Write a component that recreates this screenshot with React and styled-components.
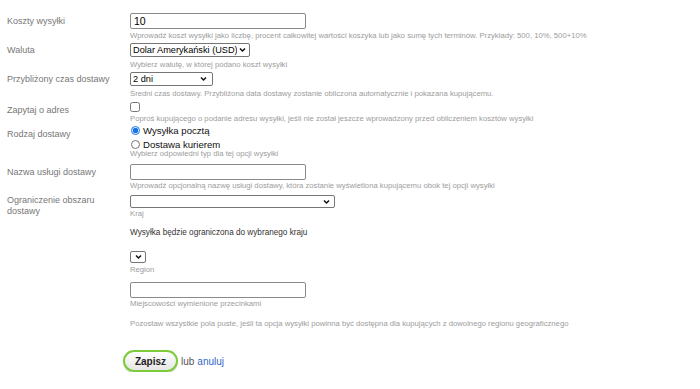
import React from "react";
import styled, { createGlobalStyle } from "styled-components";

const Global = createGlobalStyle`
  html, body { margin: 0; padding: 0; background: #fff; }
  body { font-family: "Liberation Sans", Arial, sans-serif; }
`;

const Form = styled.form`
  padding: 13px 0 0 7px;
  width: 693px;
`;

const Row = styled.div`
  display: grid;
  grid-template-columns: 123px 1fr;
  margin-bottom: ${(p) => p.$mb ?? 3}px;
`;

const Label = styled.div`
  font-size: 9px;
  color: #777;
  padding-top: ${(p) => p.$pt ?? 3}px;
  line-height: 11px;
  width: ${(p) => p.$w || "auto"};
`;

const Field = styled.div`
  display: flex;
  flex-direction: column;
  align-items: flex-start;
`;

const TextInput = styled.input`
  box-sizing: border-box;
  width: 176px;
  height: 16px;
  border: 1px solid #8a8a8a;
  border-radius: 2px;
  padding: 0 3px;
  font-family: "Liberation Sans", Arial, sans-serif;
  font-size: 10.5px;
  color: #000;
  margin: ${(p) => p.$mt || 0}px 0 0 0;
  outline: none;
`;

const SelectWrap = styled.span`
  position: relative;
  display: inline-flex;
  margin-top: ${(p) => p.$mt || 0}px;
`;

const Select = styled.select`
  appearance: none;
  -webkit-appearance: none;
  box-sizing: border-box;
  width: ${(p) => p.$w}px;
  height: ${(p) => p.$h || 14}px;
  border: 1px solid #767676;
  border-radius: 2px;
  padding: 0 12px 0 2px;
  font-family: "Liberation Sans", Arial, sans-serif;
  font-size: 9.2px;
  color: #000;
  background: #fff;
  margin: 0;
  line-height: 12px;
`;

const Chevron = styled.svg`
  position: absolute;
  right: ${(p) => p.$r ?? 4}px;
  top: 50%;
  transform: translateY(-50%);
  width: 7px;
  height: 5px;
  pointer-events: none;
`;

const Help = styled.div`
  font-size: 7.7px;
  color: #9c9c9c;
  line-height: 9px;
  margin-top: ${(p) => p.$mt ?? 2}px;
  white-space: nowrap;
`;

const Note = styled.div`
  font-size: 8.2px;
  color: #333;
  line-height: 10px;
  margin: ${(p) => p.$m || "0"};
`;

const Check = styled.input`
  width: 10px;
  height: 10px;
  margin: 0;
`;

const Radios = styled.div`
  display: flex;
  flex-direction: column;
  gap: 1px;
`;

const RadioLabel = styled.label`
  display: flex;
  align-items: center;
  gap: 3px;
  font-size: 9.6px;
  color: #111;
  line-height: 13px;
`;

const Radio = styled.input`
  width: 9px;
  height: 9px;
  margin: 0 0 0 1px;
  accent-color: #1a73e8;
`;

const Actions = styled.div`
  display: flex;
  align-items: center;
  gap: 3px;
  margin: 22px 0 0 116px;
  font-size: 10px;
  color: #555;
`;

const SaveButton = styled.button`
  box-sizing: border-box;
  width: 55px;
  height: 22px;
  border: 2px solid #7ccc3a;
  border-radius: 11px;
  background: linear-gradient(#ffffff, #e6e6e6);
  font-family: "Liberation Sans", Arial, sans-serif;
  font-weight: bold;
  font-size: 10px;
  color: #222;
  padding: 0;
  box-shadow: 0 1px 1px rgba(0,0,0,0.2);
`;

const CancelLink = styled.a`
  color: #3366cc;
  text-decoration: none;
`;

function Dropdown({ w, h, r, mt, children }) {
  return (
    <SelectWrap $mt={mt}>
      <Select $w={w} $h={h}>{children}</Select>
      <Chevron $r={r} viewBox="0 0 7 5">
        <path d="M1 1 L3.5 3.5 L6 1" fill="none" stroke="#111" strokeWidth="1.5" />
      </Chevron>
    </SelectWrap>
  );
}

export default function App() {
  return (
    <>
      <Global />
      <Form onSubmit={(e) => e.preventDefault()}>
        <Row $mb={3}>
          <Label $pt={3}>Koszty wysyłki</Label>
          <Field>
            <TextInput defaultValue="10" />
            <Help>
              Wprowadź koszt wysyłki jako liczbę, procent całkowitej wartości koszyka lub jako sumę tych terminów. Przykłady: 500, 10%, 500+10%
            </Help>
          </Field>
        </Row>
        <Row $mb={3}>
          <Label $pt={2}>Waluta</Label>
          <Field>
            <Dropdown w={120}>
              <option>Dolar Amerykański (USD)</option>
            </Dropdown>
            <Help $mt={3}>Wybierz walutę, w której podano koszt wysyłki</Help>
          </Field>
        </Row>
        <Row $mb={4}>
          <Label $pt={2}>Przybliżony czas dostawy</Label>
          <Field>
            <Dropdown w={83} r={6}>
              <option>2 dni</option>
            </Dropdown>
            <Help $mt={3}>
              Średni czas dostawy. Przybliżona data dostawy zostanie obliczona automatycznie i pokazana kupującemu.
            </Help>
          </Field>
        </Row>
        <Row $mb={1}>
          <Label $pt={3}>Zapytaj o adres</Label>
          <Field>
            <Check type="checkbox" />
            <Help $mt={2}>
              Poproś kupującego o podanie adresu wysyłki, jeśli nie został jeszcze wprowadzony przed obliczeniem kosztów wysyłki
            </Help>
          </Field>
        </Row>
        <Row $mb={6}>
          <Label $pt={5}>Rodzaj dostawy</Label>
          <Field>
            <Radios>
              <RadioLabel>
                <Radio type="radio" name="typ" defaultChecked />
                Wysyłka pocztą
              </RadioLabel>
              <RadioLabel>
                <Radio type="radio" name="typ" />
                Dostawa kurierem
              </RadioLabel>
            </Radios>
            <Help $mt={-2}>Wybierz odpowiedni typ dla tej opcji wysyłki</Help>
          </Field>
        </Row>
        <Row $mb={5}>
          <Label $pt={3}>Nazwa usługi dostawy</Label>
          <Field>
            <TextInput />
            <Help $mt={1}>
              Wprowadź opcjonalną nazwę usługi dostawy, która zostanie wyświetlona kupującemu obok tej opcji wysyłki
            </Help>
          </Field>
        </Row>
        <Row>
          <Label $pt={0} $w="112px">Ograniczenie obszaru dostawy</Label>
          <Field>
            <Dropdown w={205} h={13} r={5}>
              <option></option>
            </Dropdown>
            <Help $mt={1}>Kraj</Help>
            <Note $m="10px 0 0 0">Wysyłka będzie ograniczona do wybranego kraju</Note>
            <Dropdown w={16} h={12} r={4} mt={13}>
              <option></option>
            </Dropdown>
            <Help $mt={2}>Region</Help>
            <TextInput $mt={8} />
            <Help $mt={1}>Miejscowości wymienione przecinkami</Help>
            <Help $mt={11}>
              Pozostaw wszystkie pola puste, jeśli ta opcja wysyłki powinna być dostępna dla kupujących z dowolnego regionu geograficznego
            </Help>
          </Field>
        </Row>
        <Actions>
          <SaveButton type="submit">Zapisz</SaveButton>
          <span>lub</span>
          <CancelLink href="#">anuluj</CancelLink>
        </Actions>
      </Form>
    </>
  );
}
